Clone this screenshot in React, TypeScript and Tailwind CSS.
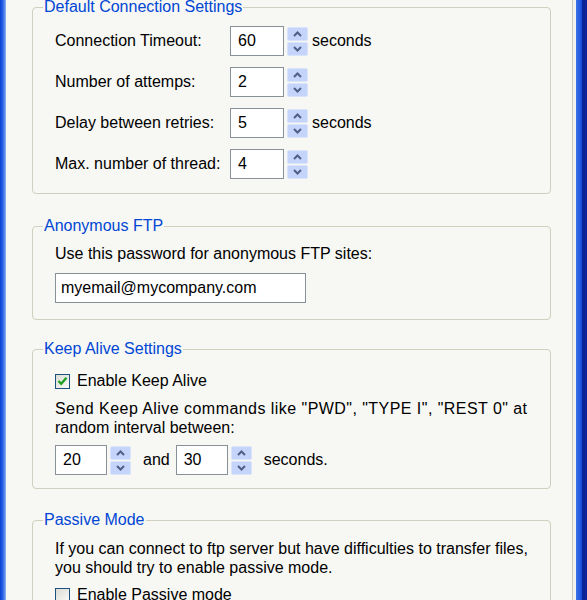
import React from 'react';

const Arrow = ({ up }: { up?: boolean }) => (
  <svg width="9" height="6" viewBox="0 0 9 6" className="block">
    <path
      d={up ? 'M1 5 L4.5 1.5 L8 5' : 'M1 1 L4.5 4.5 L8 1'}
      fill="none"
      stroke="#4d6185"
      strokeWidth={2}
    />
  </svg>
);

const Spinner = () => (
  <div className="ml-[3px] flex h-[29px] w-[21px] flex-col gap-px">
    <div className="flex flex-1 items-center justify-center rounded-[2px] border border-[#d9e4fb] bg-[#c4d4fb]">
      <Arrow up />
    </div>
    <div className="flex flex-1 items-center justify-center rounded-[2px] border border-[#d9e4fb] bg-[#c4d4fb]">
      <Arrow />
    </div>
  </div>
);

const NumberBox = ({ value, width = 'w-[54px]' }: { value: string; width?: string }) => (
  <div className="flex items-center">
    <div className={`${width} flex h-[30px] items-center border border-[#8a9097] bg-white pl-[7px]`}>
      {value}
    </div>
    <Spinner />
  </div>
);

const CheckBox = ({ checked }: { checked?: boolean }) => (
  <div className="flex h-[15px] w-[15px] items-center justify-center border border-[#1c5180] bg-gradient-to-br from-[#dcdcd5] to-[#fbfbf9]">
    {checked && (
      <svg width="11" height="10" viewBox="0 0 11 10">
        <path d="M1.5 5 L4.2 7.8 L9.5 1.8" fill="none" stroke="#21a121" strokeWidth={2.4} />
      </svg>
    )}
  </div>
);

const Group = ({
  title,
  className,
  children,
}: {
  title: string;
  className: string;
  children: React.ReactNode;
}) => (
  <fieldset className={`rounded-[4px] border border-[#d0d0bf] ${className}`}>
    <legend className="ml-[10px] px-px text-[#0046d5]">{title}</legend>
    <div className="px-[22px]">{children}</div>
  </fieldset>
);

const rows = [
  { label: 'Connection Timeout:', value: '60', unit: 'seconds' },
  { label: 'Number of attemps:', value: '2' },
  { label: 'Delay between retries:', value: '5', unit: 'seconds' },
  { label: 'Max. number of thread:', value: '4' },
];

export default function App() {
  return (
    <div className="flex h-[600px] w-[587px] overflow-hidden bg-[#f7f7f3] font-['Liberation_Sans',Arial,sans-serif] text-[16px] leading-[18px] text-black">
      {/* window frame, left */}
      <div className="w-[6px] shrink-0 bg-gradient-to-r from-[#0b3ed1] via-[#2a63e6] to-[#8fb2f2]" />

      <div className="w-[566px] shrink-0 pl-[26px] pr-[21px]">
        <Group title="Default Connection Settings" className="-mt-[2px] pb-[14px] pt-[10px]">
          <div className="flex flex-col gap-[11px]">
            {rows.map((r) => (
              <div key={r.label} className="flex items-center">
                <div className="w-[175px]">{r.label}</div>
                <NumberBox value={r.value} />
                {r.unit && <span className="ml-[4px]">{r.unit}</span>}
              </div>
            ))}
          </div>
        </Group>

        <Group title="Anonymous FTP" className="mt-[23px] pb-[16px] pt-[10px]">
          <div>Use this password for anonymous FTP sites:</div>
          <div className="mt-[10px] flex h-[30px] w-[251px] items-center border border-[#8a9097] bg-white pl-[5px]">
            myemail@mycompany.com
          </div>
        </Group>

        <Group title="Keep Alive Settings" className="mt-[20px] pb-[13px] pt-[14px]">
          <label className="flex items-center gap-[7px]">
            <CheckBox checked />
            <span>Enable Keep Alive</span>
          </label>
          <p className="mt-[9px] leading-[19px]">
            <span className="tracking-[0.45px]">
              Send Keep Alive commands like "PWD", "TYPE I", "REST 0" at
            </span>
            <br />
            random interval between:
          </p>
          <div className="mt-[8px] flex items-center">
            <NumberBox value="20" width="w-[52px]" />
            <span className="ml-[12px] mr-[6px]">and</span>
            <NumberBox value="30" width="w-[52px]" />
            <span className="ml-[12px]">seconds.</span>
          </div>
        </Group>

        <Group title="Passive Mode" className="mt-[22px] pb-[13px] pt-[10px]">
          <p className="leading-[19px]">
            If you can connect to ftp server but have difficulties to transfer files,
            <br />
            you should try to enable passive mode.
          </p>
          <label className="mt-[9px] flex items-center gap-[7px]">
            <CheckBox />
            <span>Enable Passive mode</span>
          </label>
        </Group>
      </div>

      {/* window frame, right */}
      <div className="flex shrink-0">
        <div className="w-px bg-[#c9c7ba]" />
        <div className="w-[3px] bg-[#f1f1ee]" />
        <div className="w-[6px] bg-gradient-to-r from-[#3c74ea] to-[#1549d6]" />
        <div className="w-[5px] bg-[#0a2396]" />
      </div>
    </div>
  );
}
